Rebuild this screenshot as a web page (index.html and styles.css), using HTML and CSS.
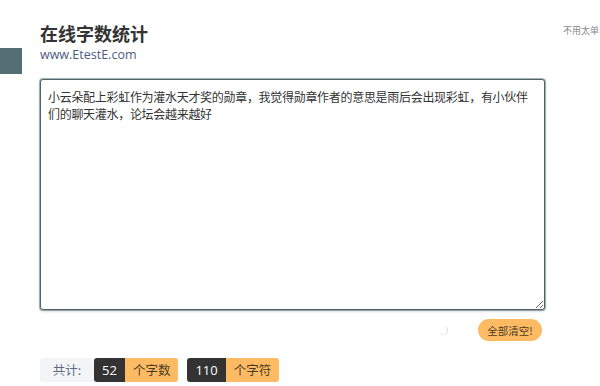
FILE: index.html
```html
<!DOCTYPE html>
<html>
<head>
    <meta charset="utf-8">
    <title>在线字数统计</title>
    <link rel="stylesheet" href="styles.css">
</head>
<body>
    <div class="page">
        <div class="side-tab"></div>

        <div class="main">
            <div class="header">
                <h1>在线字数统计</h1>
                <p>www.EtestE.com</p>
            </div>

            <textarea class="editor" id="editor">小云朵配上彩虹作为灌水天才奖的勋章，我觉得勋章作者的意思是雨后会出现彩虹，有小伙伴们的聊天灌水，论坛会越来越好</textarea>

            <div class="actions">
                <span class="spinner"></span>
                <button class="btn-clear" id="clearAll">全部清空!</button>
            </div>

            <div class="stats">
                <span class="stat-label">共计:</span>
                <span class="stat">
                    <span class="stat-num" id="wordCount">52</span>
                    <span class="stat-unit">个字数</span>
                </span>
                <span class="stat">
                    <span class="stat-num" id="charCount">110</span>
                    <span class="stat-unit">个字符</span>
                </span>
            </div>
        </div>

        <div class="aside">不用太单</div>
    </div>
</body>
</html>
```

FILE: styles.css
```css
* { box-sizing: border-box; margin: 0; padding: 0; }
body {
    width: 600px;
    height: 386px;
    overflow: hidden;
    font-family: "Open Sans", "Noto Sans CJK SC", sans-serif;
    background: #fff;
    color: #333;
}
.page { display: flex; align-items: flex-start; }
.side-tab {
    width: 22px;
    height: 26px;
    margin-top: 48px;
    background: #546e73;
    flex-shrink: 0;
}
.main { width: 505px; margin-left: 18px; flex-shrink: 0; }
.header { padding-top: 23px; height: 79px; }
.header h1 {
    font-size: 18px;
    line-height: 22px;
    font-weight: bold;
    color: #333;
}
.header p {
    font-size: 12.5px;
    line-height: 16px;
    margin-top: 2px;
    color: #4a5b82;
}
.editor {
    display: block;
    width: 505px;
    height: 231px;
    padding: 8px 7px;
    border: 1px solid #4f6469;
    border-radius: 3px;
    box-shadow: 0 0 0 1px rgba(79, 100, 105, 0.45), 0 1px 3px rgba(79, 100, 105, 0.4);
    font-family: "Noto Sans CJK SC", sans-serif;
    font-size: 12px;
    letter-spacing: -0.3px;
    line-height: 17px;
    color: #333;
    outline: none;
    resize: vertical;
}
.actions {
    display: flex;
    justify-content: flex-end;
    align-items: center;
    gap: 30px;
    padding-right: 3px;
    margin-top: 9px;
    height: 22px;
}
.spinner {
    width: 10px;
    height: 10px;
    border-radius: 50%;
    border: 1.5px solid transparent;
    border-right-color: #ddd;
    border-bottom-color: #e8e8e8;
}
.btn-clear {
    width: 64px;
    height: 22px;
    border: none;
    border-radius: 11px;
    background: #ffbb63;
    color: #4a3b25;
    font-family: "Noto Sans CJK SC", sans-serif;
    font-size: 10.5px;
    cursor: pointer;
}
.stats {
    display: flex;
    gap: 9px;
    margin-top: 17px;
    height: 24px;
}
.stat-label {
    width: 54px;
    margin-right: -9px;
    background: #f3f4f6;
    border-radius: 3px 0 0 3px;
    color: #5b6a84;
    font-family: "Noto Sans CJK SC", sans-serif;
    font-size: 12.5px;
    line-height: 24px;
    text-align: center;
}
.stat { display: flex; border-radius: 3px; overflow: hidden; }
.stat-num {
    background: #333;
    color: #fff;
    padding: 0 8px;
    font-size: 13px;
    line-height: 24px;
}
.stat-unit {
    background: #ffbb63;
    color: #4a3b25;
    padding: 0 8px;
    font-family: "Noto Sans CJK SC", sans-serif;
    font-size: 12.5px;
    line-height: 24px;
}
.aside {
    margin-left: 18px;
    margin-top: 25px;
    white-space: nowrap;
    font-family: "Noto Sans CJK SC", sans-serif;
    font-size: 9px;
    line-height: 12px;
    color: #888;
}
```
